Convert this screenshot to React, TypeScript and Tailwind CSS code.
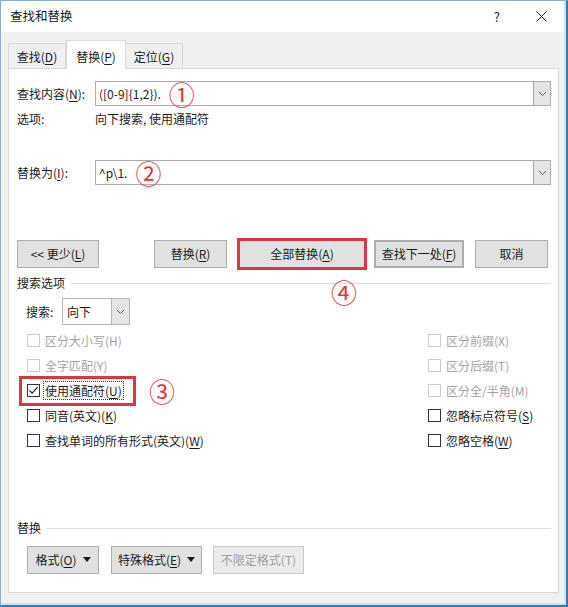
import React from "react";

const Key: React.FC<{ children: React.ReactNode }> = ({ children }) => (
  <span className="underline underline-offset-[2px]">{children}</span>
);

const Chevron: React.FC = () => (
  <svg width="9" height="6" viewBox="0 0 9 6" aria-hidden="true">
    <path d="M1 1 4.5 4.5 8 1" fill="none" stroke="#5a5a5a" strokeWidth="1" />
  </svg>
);

const Caret: React.FC = () => (
  <svg width="8" height="5" viewBox="0 0 8 5" aria-hidden="true">
    <path d="M0 0h8L4 5z" fill="#1a1a1a" />
  </svg>
);

const Mark: React.FC<{ n: string; className?: string }> = ({ n, className = "" }) => (
  <span className={`text-[26px] leading-[26px] text-[#d8393f] ${className}`}>{n}</span>
);

interface CheckProps {
  label: React.ReactNode;
  disabled?: boolean;
  checked?: boolean;
  focus?: boolean;
}

const Check: React.FC<CheckProps> = ({ label, disabled, checked, focus }) => (
  <div className="flex items-center">
    <span
      className={`flex h-[13px] w-[13px] items-center justify-center border bg-white ${
        disabled ? "border-[#cccccc]" : "border-[#333333]"
      }`}
    >
      {checked && (
        <svg width="11" height="11" viewBox="0 0 11 11" aria-hidden="true">
          <path d="M1.5 5.5 4.2 8.2 9.5 2.2" fill="none" stroke="#222" strokeWidth="1.2" />
        </svg>
      )}
    </span>
    <span
      className={`ml-[3px] px-[1px] leading-[17px] ${disabled ? "text-[#a3a3a3]" : "text-[#1a1a1a]"} ${
        focus ? "border border-dotted border-[#333]" : "border border-transparent"
      }`}
    >
      {label}
    </span>
  </div>
);

const Btn: React.FC<{ className?: string; children: React.ReactNode }> = ({ className = "", children }) => (
  <div
    className={`flex h-[28px] items-center justify-center border border-[#adadad] bg-[#e1e1e1] text-[#1a1a1a] ${className}`}
  >
    {children}
  </div>
);

const Section: React.FC<{ title: string }> = ({ title }) => (
  <div className="flex h-[16px] items-center">
    <span className="leading-none">{title}</span>
    <div className="ml-[5px] h-px flex-1 bg-[#dcdcdc]" />
  </div>
);

const rows: [CheckProps, CheckProps][] = [
  [
    { label: "区分大小写(H)", disabled: true },
    { label: "区分前缀(X)", disabled: true },
  ],
  [
    { label: "全字匹配(Y)", disabled: true },
    { label: "区分后缀(T)", disabled: true },
  ],
  [
    { label: <>使用通配符(<Key>U</Key>)</>, checked: true, focus: true },
    { label: "区分全/半角(M)", disabled: true },
  ],
  [
    { label: <>同音(英文)(<Key>K</Key>)</> },
    { label: <>忽略标点符号(<Key>S</Key>)</> },
  ],
  [
    { label: <>查找单词的所有形式(英文)(<Key>W</Key>)</> },
    { label: <>忽略空格(<Key>W</Key>)</> },
  ],
];

export default function App() {
  return (
    <div className="h-[607px] w-[568px] font-['Noto_Sans_CJK_SC','Microsoft_YaHei',sans-serif] text-[12px] text-[#1a1a1a]">
      <div className="flex h-full flex-col border-l border-t border-r-[2px] border-b-[2px] border-l-[#86b0d6] border-t-[#86b0d6] border-r-[#3c78ad] border-b-[#3c78ad]">
        <div className="flex flex-1 flex-col border-r-[2px] border-b-[2px] border-r-[#cfe2f3] border-b-[#cfe2f3]">
          {/* title bar */}
          <div className="flex h-[31px] items-center bg-white pl-[9px]">
            <span className="text-[12.5px]">查找和替换</span>
            <span className="ml-auto text-[13px] text-[#222]">?</span>
            <svg className="ml-[36px] mr-[17px]" width="11" height="11" viewBox="0 0 11 11" aria-hidden="true">
              <path d="M0.5 0.5l10 10M10.5 0.5l-10 10" stroke="#222" strokeWidth="1" />
            </svg>
          </div>

          <div className="flex flex-1 flex-col bg-[#f0f0f0] pl-[7px] pr-[5px] pb-[10px]">
            {/* tabs */}
            <div className="flex h-[36px] items-end">
              <div className="flex h-[25px] w-[58px] items-center justify-center border border-b-0 border-[#d9d9d9] bg-[#f0f0f0] pt-[2px]">
                查找(<Key>D</Key>)
              </div>
              <div className="relative z-10 -mb-px flex h-[29px] w-[60px] items-center justify-center border border-b-0 border-[#d9d9d9] bg-white pt-[3px]">
                替换(<Key>P</Key>)
              </div>
              <div className="flex h-[25px] w-[57px] items-center justify-center border border-b-0 border-l-0 border-[#d9d9d9] bg-[#f0f0f0] pt-[2px]">
                定位(<Key>G</Key>)
              </div>
            </div>

            {/* panel */}
            <div className="relative flex flex-1 flex-col border border-[#d9d9d9] bg-white pl-[8px] pr-[7px]">
              <div className="mt-[12px] flex h-[25px] items-center">
                <span className="w-[78px]">查找内容(<Key>N</Key>):</span>
                <div className="flex h-full flex-1 items-center border border-[#ababab]">
                  <span className="pl-[3px]">([0-9]{"{"}1,2{"}"}).</span>
                  <Mark n="①" className="ml-[8px] mt-[1px]" />
                  <div className="ml-auto flex h-full w-[17px] items-center justify-center border-l border-[#ababab] bg-[#e5e5e5]">
                    <Chevron />
                  </div>
                </div>
              </div>
              <div className="mt-[3px] flex h-[20px] items-center">
                <span className="w-[78px]">选项:</span>
                <span>向下搜索, 使用通配符</span>
              </div>

              <div className="mt-[31px] flex h-[25px] items-center">
                <span className="w-[78px]">替换为(<Key>I</Key>):</span>
                <div className="flex h-full flex-1 items-center border border-[#ababab]">
                  <span className="pl-[3px]">^p\1.</span>
                  <Mark n="②" className="ml-[8px] mt-[1px]" />
                  <div className="ml-auto flex h-full w-[17px] items-center justify-center border-l border-[#ababab] bg-[#e5e5e5]">
                    <Chevron />
                  </div>
                </div>
              </div>

              {/* buttons */}
              <div className="mt-[55px] flex h-[28px] items-center">
                <Btn className="w-[82px]">
                  &lt;&lt; 更少(<Key>L</Key>)
                </Btn>
                <Btn className="ml-[55px] w-[73px]">
                  替换(<Key>R</Key>)
                </Btn>
                <div className="ml-[10px] flex h-[32px] w-[130px] items-center justify-center border-[3px] border-[#d8393f] bg-[#e1e1e1]">
                  全部替换(<Key>A</Key>)
                </div>
                <Btn className="ml-[7px] w-[90px] border-2 border-[#2a78c2]">
                  查找下一处(<Key>F</Key>)
                </Btn>
                <Btn className="ml-[11px] w-[73px]">取消</Btn>
              </div>

              <div className="mt-[7px]">
                <Section title="搜索选项" />
              </div>

              <div className="mt-[7px] flex h-[27px] items-center pl-[9px]">
                <span className="w-[36px]">搜索:</span>
                <div className="flex h-full w-[68px] items-center border border-[#b5b5b5]">
                  <span className="pl-[4px]">向下</span>
                  <div className="ml-auto flex h-full w-[18px] items-center justify-center border-l border-[#b5b5b5] bg-[#e5e5e5]">
                    <Chevron />
                  </div>
                </div>
              </div>

              <div className="mt-[3px] flex flex-col">
                {rows.map(([l, r], i) => (
                  <div key={i} className="flex h-[25px] items-center">
                    <div className="flex w-[411px] items-center">
                      {l.focus ? (
                        <>
                          <div className="ml-[2px] flex h-[30px] w-[117px] items-center border-[3px] border-[#d8393f] pl-[5px]">
                            <Check {...l} />
                          </div>
                          <Mark n="③" className="ml-[13px]" />
                        </>
                      ) : (
                        <div className="pl-[10px]">
                          <Check {...l} />
                        </div>
                      )}
                    </div>
                    <Check {...r} />
                  </div>
                ))}
              </div>

              <div className="mt-[67px]">
                <Section title="替换" />
              </div>

              <div className="mt-[10px] flex h-[27px] items-center pl-[10px]">
                <Btn className="h-[27px] w-[72px] gap-[6px]">
                  <span>格式(<Key>O</Key>)</span>
                  <Caret />
                </Btn>
                <Btn className="ml-[12px] h-[27px] w-[91px] gap-[6px]">
                  <span>特殊格式(<Key>E</Key>)</span>
                  <Caret />
                </Btn>
                <Btn className="ml-[11px] h-[27px] w-[91px] border-[#c7c7c7] bg-[#ebebeb] text-[#a0a0a0]">
                  不限定格式(T)
                </Btn>
              </div>

              <Mark n="④" className="absolute left-[322px] top-[210px]" />
            </div>
          </div>
        </div>
      </div>
    </div>
  );
}
